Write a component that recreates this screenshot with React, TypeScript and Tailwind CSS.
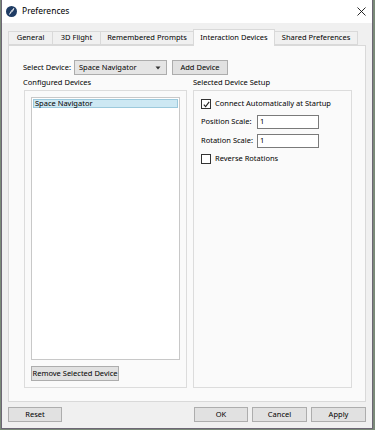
import React from "react";

const font = { fontFamily: '"Noto Sans", "Open Sans", sans-serif' };

function Btn({ children, className = "" }: { children: React.ReactNode; className?: string }) {
  return (
    <div
      className={
        "h-[15px] flex items-center justify-center border border-[#adadad] bg-[#e1e1e1] text-[7.5px] leading-none text-black " +
        className
      }
    >
      {children}
    </div>
  );
}

function Tab({ label, active = false, w }: { label: string; active?: boolean; w: string }) {
  if (active) {
    return (
      <div
        className={
          "h-[17px] -mb-px flex items-center justify-center border border-b-0 border-[#d9d9d9] bg-[#fafafa] text-[7.5px] leading-none relative z-10 " +
          w
        }
      >
        {label}
      </div>
    );
  }
  return (
    <div
      className={
        "h-[14px] flex items-center justify-center border border-[#d9d9d9] border-r-0 bg-[#f0f0f0] text-[7.5px] leading-none " +
        w
      }
    >
      {label}
    </div>
  );
}

function Check() {
  return (
    <svg width="7" height="7" viewBox="0 0 7 7">
      <path d="M0.8 3.6 L2.6 5.6 L6.2 0.8" stroke="#222" strokeWidth="1.1" fill="none" />
    </svg>
  );
}

export default function App() {
  return (
    <div className="w-[375px] h-[430px] bg-[#7a8a78] pl-px" style={font}>
      <div className="w-[372px] h-[429px] border border-t-0 border-[#6d6675] bg-[#f0f0f0] flex flex-col text-black">
        {/* title bar */}
        <div className="h-[23px] bg-white flex items-center pl-[4px] pr-[6px]">
          <svg width="11" height="11" viewBox="0 0 11 11" className="mr-[5px]">
            <circle cx="5.5" cy="5.5" r="5.5" fill="#1f3c64" />
            <path d="M3.5 8.5 C4.5 6 6 4 7.8 2.5 C7.2 4.5 5.8 6.2 4.2 7.2" stroke="#fff" strokeWidth="0.9" fill="none" />
          </svg>
          <span className="text-[8.5px]">Preferences</span>
          <div className="flex-1" />
          <svg width="9" height="9" viewBox="0 0 9 9">
            <path d="M0.5 0.5 L8.5 8.5 M8.5 0.5 L0.5 8.5" stroke="#111" strokeWidth="0.9" />
          </svg>
        </div>

        {/* body */}
        <div className="flex-1 flex flex-col px-[6px] pt-[5px]">
          {/* tabs */}
          <div className="flex items-end h-[17px] pl-0">
            <Tab label="General" w="w-[44px]" />
            <Tab label="3D Flight" w="w-[48px]" />
            <Tab label="Remembered Prompts" w="w-[93px] border-r-0" />
            <Tab label="Interaction Devices" active w="w-[82px]" />
            <div className="h-[14px] w-[83px] flex items-center justify-center border border-l-0 border-[#d9d9d9] bg-[#f0f0f0] text-[7.5px] leading-none">
              Shared Preferences
            </div>
          </div>

          {/* panel */}
          <div className="w-[358px] h-[357px] border border-[#d9d9d9] bg-[#fafafa] flex flex-col pl-[14px] pr-[13px] pt-[14px] pb-[13px]">
            <div className="flex items-center h-[15px] text-[7.5px]">
              <span className="w-[51px]">Select Device:</span>
              <div className="w-[93px] h-[15px] border border-[#adadad] bg-[#e5e5e5] flex items-center pl-[4px] pr-[5px]">
                <span className="flex-1">Space Navigator</span>
                <svg width="6" height="4" viewBox="0 0 6 4">
                  <path d="M0.5 0.5 L5.5 0.5 L3 3.5 Z" fill="#333" />
                </svg>
              </div>
              <Btn className="ml-[5px] w-[56px]">Add Device</Btn>
            </div>

            <div className="flex-1 grid grid-cols-[164px_159px] gap-x-[6px]">
              <div className="flex flex-col">
                <div className="h-[15px] text-[7.5px] flex items-center">Configured Devices</div>
                <div className="flex-1 border border-[#dcdcdc] ml-px flex flex-col p-[6px] pb-[6px]">
                  <div className="flex-1 border border-[#c8c8c8] bg-white p-px">
                    <div className="h-[9px] bg-[#cde8f3] border border-[#9cc9dc] text-[7.5px] leading-none flex items-center pl-px">
                      Space Navigator
                    </div>
                  </div>
                  <Btn className="mt-[6px] w-[88px]">Remove Selected Device</Btn>
                </div>
              </div>
              <div className="flex flex-col">
                <div className="h-[15px] text-[7.5px] flex items-center">Selected Device Setup</div>
                <div className="flex-1 border border-[#dcdcdc] flex flex-col pl-[7px] pt-[8px] text-[7.5px]">
                  <div className="flex items-center h-[10px]">
                    <div className="w-[10px] h-[10px] border border-[#333] bg-white flex items-center justify-center">
                      <Check />
                    </div>
                    <span className="ml-[4px]">Connect Automatically at Startup</span>
                  </div>
                  <div className="flex items-center h-[14px] mt-[6px]">
                    <span className="w-[56px]">Position Scale:</span>
                    <div className="w-[62px] h-[14px] border border-[#7a7a7a] bg-white flex items-center pl-[2px]">1</div>
                  </div>
                  <div className="flex items-center h-[14px] mt-[5px]">
                    <span className="w-[56px]">Rotation Scale:</span>
                    <div className="w-[62px] h-[14px] border border-[#7a7a7a] bg-white flex items-center pl-[2px]">1</div>
                  </div>
                  <div className="flex items-center h-[10px] mt-[6px]">
                    <div className="w-[10px] h-[10px] border border-[#333] bg-white" />
                    <span className="ml-[4px]">Reverse Rotations</span>
                  </div>
                </div>
              </div>
            </div>
          </div>

          {/* bottom buttons */}
          <div className="flex mt-[5px]">
            <Btn className="w-[54px]">Reset</Btn>
            <div className="flex-1" />
            <Btn className="w-[54px]">OK</Btn>
            <Btn className="w-[55px] ml-[4px]">Cancel</Btn>
            <Btn className="w-[55px] ml-[4px]">Apply</Btn>
          </div>
        </div>
      </div>
    </div>
  );
}
